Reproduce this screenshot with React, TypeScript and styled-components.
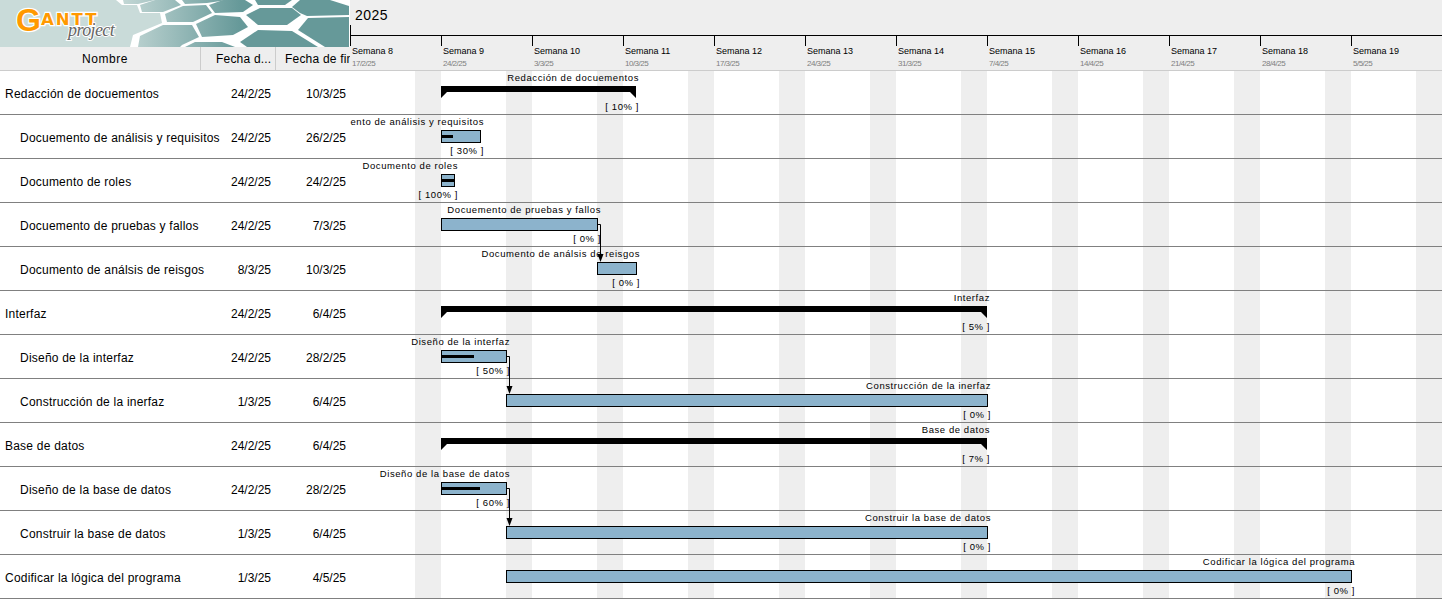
import React from "react";
import styled, { createGlobalStyle } from "styled-components";

const GlobalStyle = createGlobalStyle`
  * {
    box-sizing: border-box;
  }
  html, body {
    margin: 0;
    background: #fff;
    overflow: hidden;
  }
  body {
    font-family: "Liberation Sans", Arial, sans-serif;
    color: #000;
  }
`;

const Page = styled.div`
  display: grid;
  grid-template-columns: 350px 1fr;
  width: 1442px;
  height: 599px;
  overflow: hidden;
`;

const TablePane = styled.div`
  display: flex;
  flex-direction: column;
`;

const LogoBox = styled.div`
  height: 47px;
  svg {
    display: block;
  }
`;

const columns = "201px 75px 74px";

const TableHead = styled.div`
  display: grid;
  grid-template-columns: ${columns};
  height: 24px;
  background: #eeeeee;
  border-bottom: 1px solid #cccccc;
`;

const HeadCell = styled.div<{ $pad: number; $last?: boolean }>`
  display: flex;
  align-items: center;
  padding-top: 1px;
  padding-left: ${(p) => p.$pad}px;
  border-right: ${(p) => (p.$last ? "none" : "1px solid #cccccc")};
  font-size: 12px;
  letter-spacing: 0.2px;
  white-space: nowrap;
  overflow: hidden;
`;

const NameHead = styled(HeadCell)`
  justify-content: center;
  letter-spacing: 0.55px;
`;

const TableRow = styled.div`
  display: grid;
  grid-template-columns: ${columns};
  height: 44px;
  align-items: center;
  border-bottom: 1px solid #808080;
  font-size: 12px;
  white-space: nowrap;
`;

const NameCell = styled.div<{ $indent: boolean }>`
  padding: 2px 0 0 ${(p) => (p.$indent ? 20 : 5)}px;
  letter-spacing: 0.22px;
`;

const DateCell = styled.div<{ $pad: number }>`
  padding: 2px ${(p) => p.$pad}px 0 0;
  text-align: right;
`;

const ChartPane = styled.div`
  display: flex;
  flex-direction: column;
  min-width: 0;
  overflow: hidden;
`;

const YearRow = styled.div`
  position: relative;
  height: 36px;
  padding-left: 5px;
  background: #eeeeee;
  border-bottom: 1px solid #000;
  font-size: 14px;
  line-height: 30px;
  letter-spacing: 0.5px;

  &::before {
    content: "";
    position: absolute;
    left: 0;
    top: 25px;
    width: 1px;
    height: 10px;
    background: #000;
  }
`;

const WeekRow = styled.div`
  display: flex;
  height: 35px;
  background: #eeeeee;
  border-bottom: 1px solid #cccccc;
`;

const WeekCell = styled.div`
  position: relative;
  flex: 0 0 91px;
  padding: 9px 0 0 2px;

  &::before {
    content: "";
    position: absolute;
    left: 0;
    top: 0;
    width: 1px;
    height: 10px;
    background: #000;
  }
`;

const WeekName = styled.div`
  font-size: 9px;
  line-height: 12px;
  white-space: nowrap;
`;

const WeekDate = styled.div`
  margin-top: 1px;
  font-size: 8px;
  line-height: 11px;
  letter-spacing: -0.5px;
  color: #808080;
`;

const ChartBody = styled.div`
  position: relative;
  flex: 1;
  background: repeating-linear-gradient(
    to right,
    transparent 0,
    transparent 65px,
    #eeeeee 65px,
    #eeeeee 91px
  );
`;

const ChartRow = styled.div`
  position: relative;
  height: 44px;
  border-bottom: 1px solid #808080;
`;

const Track = styled.div<{ $left: number; $width: number }>`
  position: absolute;
  top: 0;
  bottom: 0;
  left: ${(p) => p.$left}px;
  width: ${(p) => p.$width}px;
`;

const BarLabel = styled.span<{ $top: number }>`
  position: absolute;
  right: -3px;
  top: ${(p) => p.$top}px;
  font-size: 9.5px;
  line-height: 12px;
  letter-spacing: 0.58px;
  white-space: nowrap;
`;

const TaskBar = styled.div`
  position: absolute;
  left: 0;
  right: 0;
  top: 15px;
  height: 13px;
  background: #8cb3cc;
  border: 1px solid #000;
`;

const Progress = styled.div<{ $pct: number }>`
  position: absolute;
  left: 0;
  top: 4px;
  width: ${(p) => p.$pct}%;
  height: 3px;
  background: #000;
`;

const SummaryBar = styled.div`
  position: absolute;
  left: 0;
  right: 0;
  top: 15px;
  height: 12px;
  background: #000;
  clip-path: polygon(
    0 0,
    100% 0,
    100% 100%,
    calc(100% - 6px) 6px,
    6px 6px,
    0 100%
  );
`;

const ArrowLayer = styled.svg`
  position: absolute;
  left: 0;
  top: 0;
  pointer-events: none;
`;

type Task = {
  name: string;
  start: string;
  end: string;
  x: number;
  w: number;
  pct: number;
  summary?: boolean;
  root?: boolean;
};

const tasks: Task[] = [
  { name: "Redacción de docuementos", start: "24/2/25", end: "10/3/25", x: 441, w: 195, pct: 10, summary: true, root: true },
  { name: "Docuemento de análisis y requisitos", start: "24/2/25", end: "26/2/25", x: 441, w: 40, pct: 30 },
  { name: "Documento de roles", start: "24/2/25", end: "24/2/25", x: 441, w: 14, pct: 100 },
  { name: "Docuemento de pruebas y fallos", start: "24/2/25", end: "7/3/25", x: 441, w: 157, pct: 0 },
  { name: "Documento de análsis de reisgos", start: "8/3/25", end: "10/3/25", x: 597, w: 40, pct: 0 },
  { name: "Interfaz", start: "24/2/25", end: "6/4/25", x: 441, w: 546, pct: 5, summary: true, root: true },
  { name: "Diseño de la interfaz", start: "24/2/25", end: "28/2/25", x: 441, w: 66, pct: 50 },
  { name: "Construcción de la inerfaz", start: "1/3/25", end: "6/4/25", x: 506, w: 482, pct: 0 },
  { name: "Base de datos", start: "24/2/25", end: "6/4/25", x: 441, w: 546, pct: 7, summary: true, root: true },
  { name: "Diseño de la base de datos", start: "24/2/25", end: "28/2/25", x: 441, w: 66, pct: 60 },
  { name: "Construir la base de datos", start: "1/3/25", end: "6/4/25", x: 506, w: 482, pct: 0 },
  { name: "Codificar la lógica del programa", start: "1/3/25", end: "4/5/25", x: 506, w: 846, pct: 0, root: true },
];

const weeks = [
  ["Semana 8", "17/2/25"],
  ["Semana 9", "24/2/25"],
  ["Semana 10", "3/3/25"],
  ["Semana 11", "10/3/25"],
  ["Semana 12", "17/3/25"],
  ["Semana 13", "24/3/25"],
  ["Semana 14", "31/3/25"],
  ["Semana 15", "7/4/25"],
  ["Semana 16", "14/4/25"],
  ["Semana 17", "21/4/25"],
  ["Semana 18", "28/4/25"],
  ["Semana 19", "5/5/25"],
];

// hexagon cells of the logo banner
const hexagons = [
  "123,0 155,0 138,4 124,4",
  "140,5 155,0 175,0 181,5 163,12 142,12",
  "182,0 227,0 207,3 185,4",
  "165,14 183,6 206,5 212,13 193,22 167,22",
  "140,36 163,25 192,25 199,37 182,45 180,47 138,47",
  "209,5 223,0 245,0 253,5 243,12 215,13",
  "196,24 215,15 240,17 248,27 233,35 202,37",
  "185,47 195,42 222,42 235,47",
  "255,0 292,0 285,5 258,5",
  "292,7 300,0 330,0 349,6 349,15 307,16 300,13",
  "246,15 260,8 292,8 301,15 287,25 258,25",
  "240,42 258,30 292,31 318,47 247,47",
  "298,30 308,18 349,17 349,47 325,47",
];

function Logo() {
  return (
    <svg width="350" height="47" viewBox="0 0 350 47">
      <defs>
        <linearGradient id="hexFill" gradientUnits="userSpaceOnUse" x1="115" y1="0" x2="240" y2="0">
          <stop offset="0" stopColor="#c9dbd9" />
          <stop offset="1" stopColor="#669999" />
        </linearGradient>
      </defs>
      <rect width="350" height="47" fill="#c9dbd9" />
      <polygon
        points="116,0 122,5 137,5 140,13 160,13 162,23 133,35 130,47 350,47 350,0"
        fill="#fff"
      />
      {hexagons.map((points) => (
        <polygon key={points} points={points} fill="url(#hexFill)" />
      ))}
      <g fontWeight="700" fill="#ff9900" stroke="#fff" strokeWidth="2.5" style={{ paintOrder: "stroke" }}>
        <text x="16" y="31" fontSize="32" fontFamily="'Liberation Sans', Arial, sans-serif">G</text>
        <text x="41" y="25" fontSize="16.5" letterSpacing="2" fontFamily="'DejaVu Sans', sans-serif">ANTT</text>
      </g>
      <text
        x="68"
        y="36"
        fontFamily="'Liberation Serif', serif"
        fontStyle="italic"
        fontSize="18"
        letterSpacing="-0.6"
        fill="#666"
        stroke="#fff"
        strokeWidth="2"
        style={{ paintOrder: "stroke" }}
      >
        project
      </text>
    </svg>
  );
}

function Arrow({ x, from, to }: { x: number; from: number; to: number }) {
  return (
    <g>
      <path d={`M${x - 3} ${from + 0.5}H${x + 0.5}V${to - 6}`} fill="none" stroke="#000" />
      <polygon points={`${x - 2.5},${to - 8} ${x + 3.5},${to - 8} ${x + 0.5},${to}`} fill="#000" />
    </g>
  );
}

export default function App() {
  return (
    <>
      <GlobalStyle />
      <Page>
        <TablePane>
          <LogoBox>
            <Logo />
          </LogoBox>
          <TableHead>
            <NameHead $pad={10}>Nombre</NameHead>
            <HeadCell $pad={15}>Fecha d...</HeadCell>
            <HeadCell $pad={9} $last>
              Fecha de fin
            </HeadCell>
          </TableHead>
          {tasks.map((t) => (
            <TableRow key={t.name}>
              <NameCell $indent={!t.root}>{t.name}</NameCell>
              <DateCell $pad={5}>{t.start}</DateCell>
              <DateCell $pad={4}>{t.end}</DateCell>
            </TableRow>
          ))}
        </TablePane>

        <ChartPane>
          <YearRow>2025</YearRow>
          <WeekRow>
            {weeks.map(([name, date]) => (
              <WeekCell key={name}>
                <WeekName>{name}</WeekName>
                <WeekDate>{date}</WeekDate>
              </WeekCell>
            ))}
          </WeekRow>
          <ChartBody>
            {tasks.map((t) => (
              <ChartRow key={t.name}>
                <Track $left={t.x - 350} $width={t.w}>
                  <BarLabel $top={1}>{t.name}</BarLabel>
                  {t.summary ? (
                    <SummaryBar />
                  ) : (
                    <TaskBar>{t.pct > 0 && <Progress $pct={t.pct} />}</TaskBar>
                  )}
                  <BarLabel $top={30}>{`[ ${t.pct}% ]`}</BarLabel>
                </Track>
              </ChartRow>
            ))}
            <ArrowLayer width="1092" height="528">
              <Arrow x={250} from={153} to={191} />
              <Arrow x={159} from={285} to={323} />
              <Arrow x={159} from={417} to={455} />
            </ArrowLayer>
          </ChartBody>
        </ChartPane>
      </Page>
    </>
  );
}
